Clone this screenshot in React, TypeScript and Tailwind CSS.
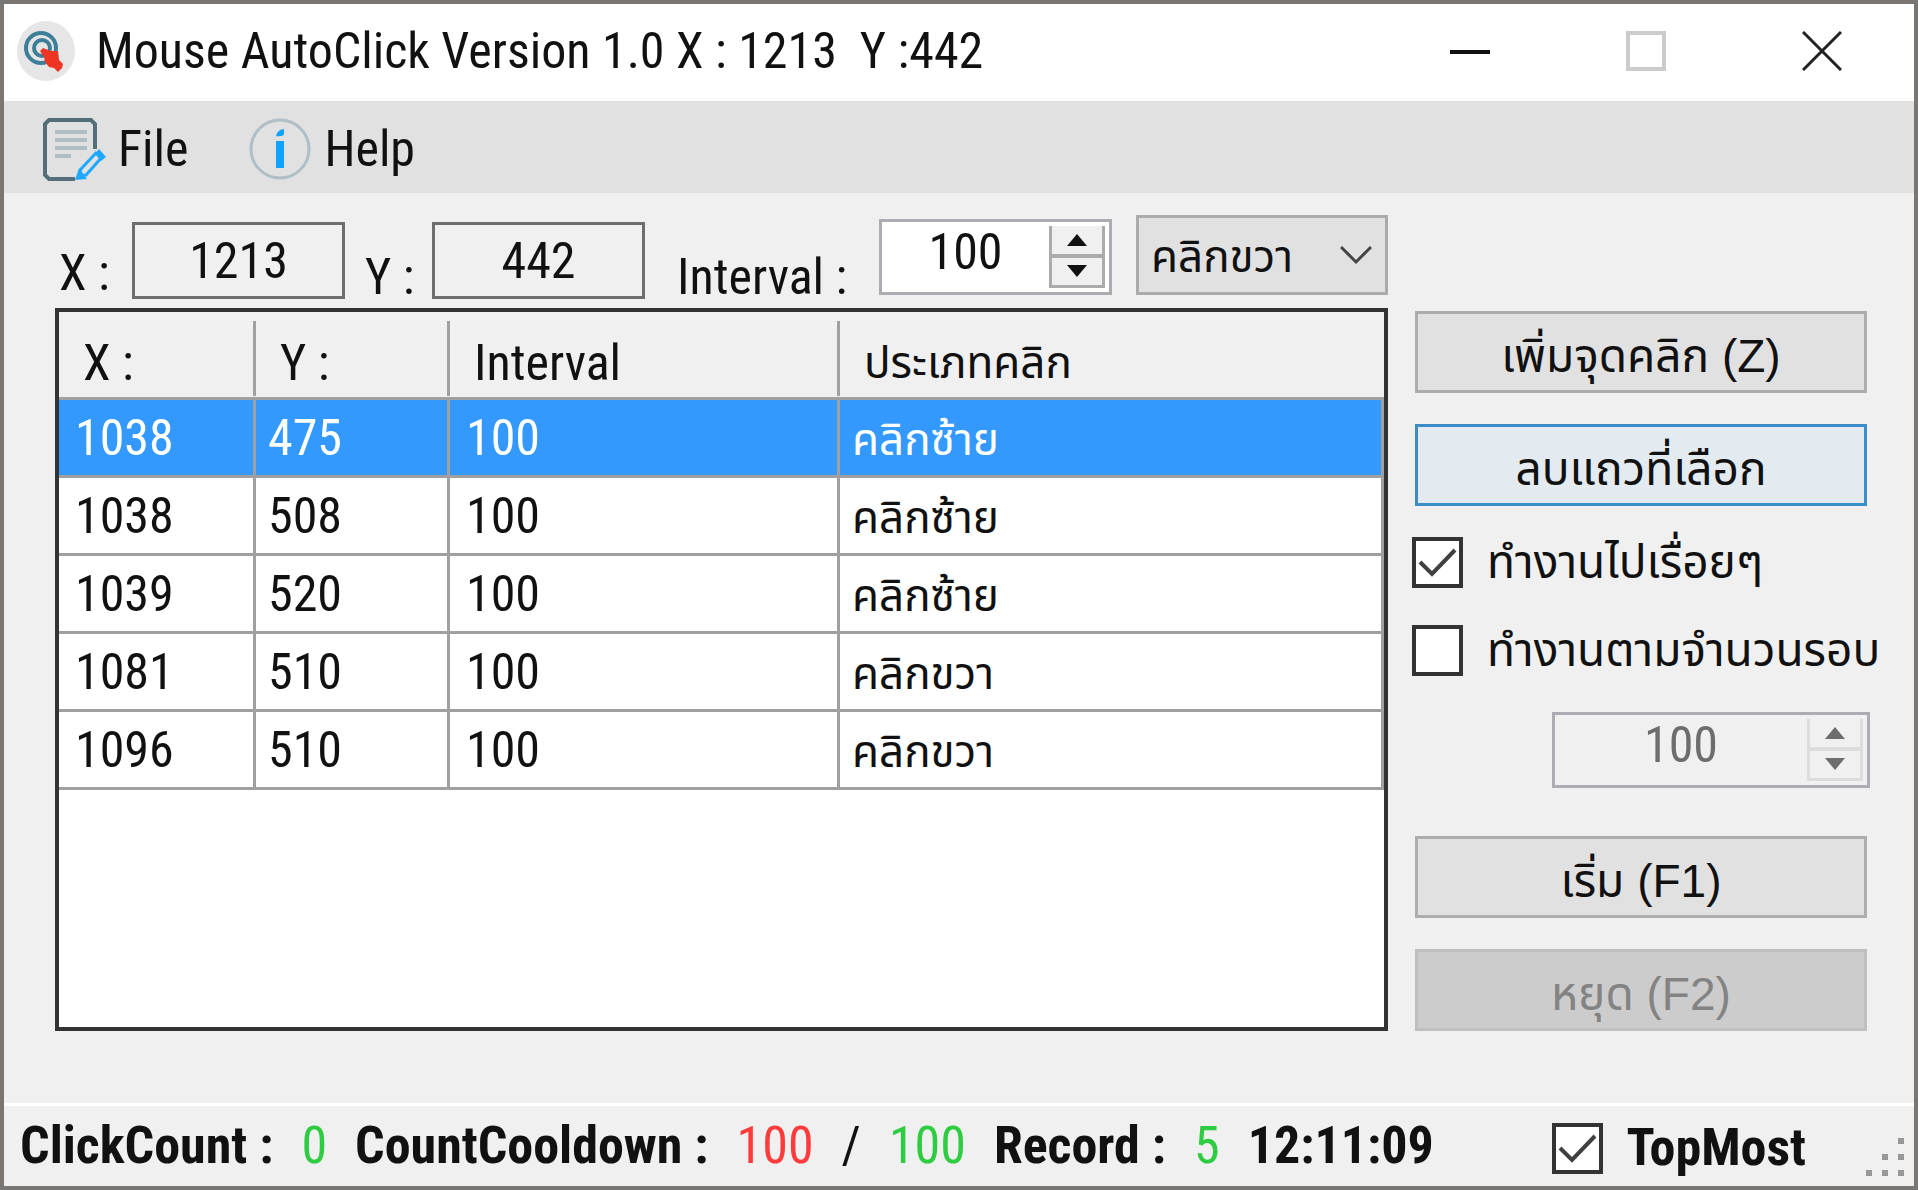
import React from 'react';

interface ClickPoint {
  x: number;
  y: number;
  interval: number;
  type: string;
}

const points: ClickPoint[] = [
  { x: 1038, y: 475, interval: 100, type: 'คลิกซ้าย' },
  { x: 1038, y: 508, interval: 100, type: 'คลิกซ้าย' },
  { x: 1039, y: 520, interval: 100, type: 'คลิกซ้าย' },
  { x: 1081, y: 510, interval: 100, type: 'คลิกขวา' },
  { x: 1096, y: 510, interval: 100, type: 'คลิกขวา' },
];

// Thai labels fall through to the Thai face behind the Latin one
const thai = "font-['Liberation_Sans','Noto_Sans_Thai',sans-serif]";

const AppLogo = () => (
  <svg className="w-15 h-15 shrink-0" viewBox="0 0 60 60" fill="none">
    <ellipse cx="30" cy="30" rx="29" ry="30" fill="#e6e6e6" />
    <circle cx="25" cy="27" r="15" stroke="#3d7f99" strokeWidth="4" />
    <circle cx="26" cy="27" r="8" stroke="#3d7f99" strokeWidth="4" />
    <path d="M24 30 L27 27 L35 30 L42 30 L43 39 L47 43 L46 47 L42 51 L38 47 L33 46 L29 41 L28 36 Z" fill="#ee3524" />
  </svg>
);

const FileIcon = () => (
  <svg className="w-16 h-16 shrink-0" viewBox="0 0 64 64" fill="none">
    <path d="M33 62 H7 L3 58 V7 L7 3 H49 L53 7 V32" stroke="#546e7a" strokeWidth="4" />
    <path d="M13 15 H45 M13 23 H45 M13 31 H45 M13 39 H29" stroke="#b0bec5" strokeWidth="4" />
    <path d="M37 59 L39 52 L54 36 L60 40 L44 58 Z" stroke="#1fa8ff" strokeWidth="3" />
    <path d="M33 63 L37 51 L45 62 Z M53 37 L57 32 L64 40 L59 44 Z" fill="#1fa8ff" />
  </svg>
);

const InfoIcon = () => (
  <svg className="w-16 h-16 shrink-0" viewBox="0 0 64 64" fill="none">
    <circle cx="32" cy="32" r="29" stroke="#b0bec5" strokeWidth="3" />
    <path d="M28 19 Q29 13 36 12 V17 Q35 20 28 19 Z M28 24 H36 V51 H28 Z" fill="#0fa2ff" />
  </svg>
);

interface SpinnerProps {
  id: string;
  label: string;
  className: string;
  disabled?: boolean;
}

const Spinner: React.FC<SpinnerProps> = ({ id, label, className, disabled }) => (
  <div className={`flex h-19 border-3 border-[#abadb3] pr-1 ${disabled ? 'bg-[#f0f0f0] text-[#6d6d6d]' : 'bg-white'} ${className}`}>
    <input
      id={id}
      aria-label={label}
      type="text"
      defaultValue="100"
      disabled={disabled}
      className="min-w-0 flex-1 h-15 text-center leading-none outline-none"
    />
    <div className={`flex flex-col w-14 my-1 border-x-3 border-b-3 bg-[#f0f0f0] ${disabled ? 'border-[#dcdcdc]' : 'border-[#ababab]'}`}>
      <button aria-label={`${label} up`} disabled={disabled} className="flex-1 flex items-center justify-center">
        <svg className="w-5 h-3" viewBox="0 0 20 12"><path d="M10 0 L20 12 H0 Z" fill="currentColor" /></svg>
      </button>
      <div className={`h-1 ${disabled ? 'bg-[#dcdcdc]' : 'bg-[#ababab]'}`} />
      <button aria-label={`${label} down`} disabled={disabled} className="flex-1 flex items-center justify-center">
        <svg className="w-5 h-3" viewBox="0 0 20 12"><path d="M0 0 H20 L10 12 Z" fill="currentColor" /></svg>
      </button>
    </div>
  </div>
);

interface CheckProps {
  label: string;
  checked?: boolean;
  className?: string;
}

const Check: React.FC<CheckProps> = ({ label, checked, className = '' }) => (
  <label className={`flex items-center gap-6 whitespace-nowrap ${className}`}>
    <span className="grid shrink-0">
      <input
        type="checkbox"
        defaultChecked={checked}
        className="peer col-start-1 row-start-1 appearance-none size-[51px] bg-white border-4 border-[#333333]"
      />
      <svg className="col-start-1 row-start-1 size-[51px] pointer-events-none invisible peer-checked:visible" viewBox="0 0 51 51" fill="none">
        <path d="M8 25 L20 37 L43 13" stroke="#404040" strokeWidth="4" />
      </svg>
    </span>
    <span>{label}</span>
  </label>
);

export default function App() {
  const button = `h-[82px] mx-[3px] pt-2 border-3 text-center text-[46px] ${thai}`;
  const box = 'w-[213px] h-[77px] mt-[7px] border-3 border-[#6e6e6e] text-center outline-none';
  const headCell = 'h-[75px] mt-2 pt-3 pl-6 border-[#a0a0a0]';

  return (
    <div className="min-h-screen flex flex-col bg-[#f0f0f0] border-4 border-[#7a7674] text-[#111] font-['Roboto_Condensed','Noto_Sans_Thai',sans-serif] text-[50px] leading-[60px]">
      <header className="flex items-center h-[97px] bg-white pl-3 pr-1 pb-[3px]">
        <AppLogo />
        <h1 className="flex-1 pl-5 whitespace-pre">Mouse AutoClick Version 1.0 X : 1213  Y :442</h1>
        <button aria-label="Minimize" className="w-44 h-full flex items-center justify-center">
          <svg className="w-10 h-10" viewBox="0 0 40 40"><path d="M0 21 H40" stroke="#111" strokeWidth="4" /></svg>
        </button>
        <button aria-label="Maximize" disabled className="w-44 h-full flex items-center justify-center">
          <svg className="w-10 h-10" viewBox="0 0 40 40"><path d="M2 2 H38 V38 H2 Z" fill="none" stroke="#cccccc" strokeWidth="4" /></svg>
        </button>
        <button aria-label="Close" className="w-44 h-full flex items-center justify-center">
          <svg className="w-10 h-10" viewBox="0 0 40 40"><path d="M1 1 L39 39 M39 1 L1 39" stroke="#222" strokeWidth="3" /></svg>
        </button>
      </header>

      <nav className="flex items-center h-[92px] bg-[#e1e1e1] pl-[38px] pt-1 gap-15">
        <button className="flex items-center gap-3"><FileIcon />File</button>
        <button className="flex items-center gap-3"><InfoIcon />Help</button>
      </nav>

      <main className="flex-1 flex gap-6 pt-[22px] pl-[51px] pr-11">
        <section className="flex-1 min-w-0 flex flex-col">
          <div className="flex items-start h-[93px]">
            <label htmlFor="pos-x" className="w-[77px] pt-7 pl-1 whitespace-pre">X :</label>
            <input id="pos-x" readOnly defaultValue="1213" className={box} />
            <label htmlFor="pos-y" className="w-[87px] pt-8 pl-5 whitespace-pre">Y :</label>
            <input id="pos-y" readOnly defaultValue="442" className={box} />
            <label htmlFor="interval" className="flex-1 pt-8 pl-8 whitespace-pre">Interval :</label>
            <Spinner id="interval" label="Interval" className="w-[233px] mt-1" />
            <div className="grid ml-6">
              <select aria-label="Click type" defaultValue="right" className={`col-start-1 row-start-1 appearance-none w-[252px] h-20 pt-1 pl-3 bg-[#e1e1e1] border-3 border-[#ababab] outline-none text-[44px] ${thai}`}>
                <option value="left">คลิกซ้าย</option>
                <option value="right">คลิกขวา</option>
              </select>
              <svg className="col-start-1 row-start-1 justify-self-end self-center w-8 h-5 mr-4 pointer-events-none" viewBox="0 0 32 20" fill="none">
                <path d="M1 2 L16 17 L31 2" stroke="#444" strokeWidth="3" />
              </svg>
            </div>
          </div>

          <div className="h-[723px] border-4 border-[#333333] bg-white">
            <table className="w-full table-fixed border-separate border-spacing-0 text-left">
              <thead>
                <tr className="h-[88px] bg-[#f0f0f0]">
                  <th className="w-[197px] p-0 border-b-3 border-[#a0a0a0] font-normal"><div className={`${headCell} border-r-3`}>X :</div></th>
                  <th className="w-[194px] p-0 border-b-3 border-[#a0a0a0] font-normal"><div className={`${headCell} border-r-3`}>Y :</div></th>
                  <th className="w-[390px] p-0 border-b-3 border-[#a0a0a0] font-normal"><div className={`${headCell} border-r-3`}>Interval</div></th>
                  <th className="p-0 border-b-3 border-[#a0a0a0] font-normal"><div className={`${headCell} text-[44px] ${thai}`}>ประเภทคลิก</div></th>
                </tr>
              </thead>
              <tbody>
                {points.map((p, i) => (
                  <tr key={i} className={i === 0 ? 'h-[78px] bg-[#3399ff] text-white' : 'h-[78px]'}>
                    <td className="p-0 pl-4 border-r-3 border-b-3 border-[#a0a0a0]">{p.x}</td>
                    <td className="p-0 pl-3 border-r-3 border-b-3 border-[#a0a0a0]">{p.y}</td>
                    <td className="p-0 pl-4 border-r-3 border-b-3 border-[#a0a0a0]">{p.interval}</td>
                    <td className={`p-0 pt-1 pl-3 border-r-3 border-b-3 border-[#a0a0a0] text-[44px] ${thai}`}>{p.type}</td>
                  </tr>
                ))}
              </tbody>
            </table>
          </div>
        </section>

        <aside className="w-[458px] flex flex-col pt-24">
          <button className={`${button} bg-[#e1e1e1] border-[#adadad]`}>เพิ่มจุดคลิก (Z)</button>
          <button className={`${button} mt-[31px] bg-[#e3eaf0] border-[#3c8cc8]`}>ลบแถวที่เลือก</button>
          <Check label="ทำงานไปเรื่อยๆ" checked className={`mt-6 h-16 text-[46px] ${thai}`} />
          <Check label="ทำงานตามจำนวนรอบ" className={`mt-6 h-16 text-[46px] ${thai}`} />
          <Spinner id="rounds" label="Rounds" disabled className="w-[318px] mt-[30px] ml-auto" />
          <button className={`${button} mt-12 bg-[#e1e1e1] border-[#adadad]`}>เริ่ม (F1)</button>
          <button disabled className={`${button} mt-[31px] bg-[#cccccc] border-[#bfbfbf] text-[#838383]`}>หยุด (F2)</button>
        </aside>
      </main>

      <footer className="flex items-center h-[83px] pl-4 pr-2 border-t-3 border-white whitespace-pre text-[52px]">
        <b>ClickCount :</b>
        <span className="pl-7 text-[#2ecc40]">0</span>
        <b className="pl-7">CountCooldown :</b>
        <span className="pl-7 text-[#ff3b3b]">100</span>
        <span className="px-7">/</span>
        <span className="text-[#2ecc40]">100</span>
        <b className="pl-7">Record :</b>
        <span className="pl-7 text-[#2ecc40]">5</span>
        <b className="pl-7">12:11:09</b>
        <Check label="TopMost" checked className="ml-auto mr-15 pt-1 font-bold" />
        <svg className="w-10 h-10 self-end mb-2" viewBox="0 0 40 40" fill="#999">
          <path d="M32 0h6v6h-6z M32 16h6v6h-6z M32 32h6v6h-6z M16 16h6v6h-6z M16 32h6v6h-6z M0 32h6v6h-6z" />
        </svg>
      </footer>
    </div>
  );
}
